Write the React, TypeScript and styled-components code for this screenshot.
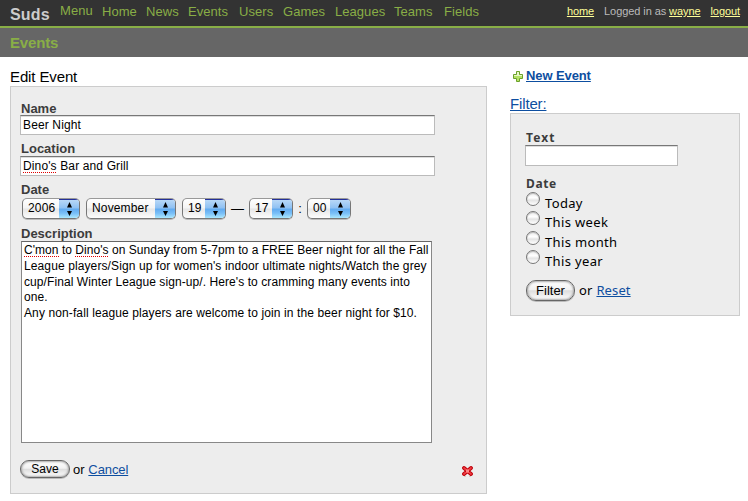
import React from "react";
import styled, { createGlobalStyle } from "styled-components";

const GlobalStyle = createGlobalStyle`
  * { box-sizing: border-box; }
  html, body { margin: 0; padding: 0; background: #fff; }
  body { width: 748px; height: 501px; overflow: hidden; font-family: "Liberation Sans", Arial, sans-serif; color: #000; }
`;

const Header = styled.header`
  display: flex;
  height: 28px;
  padding: 0 8px 0 10px;
  background: #333;
  border-bottom: 2px solid #89ae46;
`;
const Logo = styled.div`
  width: 50px;
  padding-top: 5px;
  font-size: 16px;
  line-height: 19px;
  letter-spacing: 0.15px;
  font-weight: bold;
  color: #ccc;
`;
const Nav = styled.nav`
  display: flex;
  flex: 1;
`;
const NavItem = styled.a<{ $top: number; $w: number }>`
  width: ${(p) => p.$w}px;
  padding-top: ${(p) => p.$top}px;
  font-size: 13px;
  line-height: 15px;
  letter-spacing: 0.05px;
  white-space: nowrap;
  color: #89ae46;
`;
const Account = styled.div`
  display: flex;
  gap: 10px;
  padding-top: 5px;
  font-size: 11px;
  line-height: 13px;
  letter-spacing: -0.08px;
  color: #bbb;
`;
const AccountLink = styled.a`
  color: #ff9;
  text-decoration: underline;
`;
const TitleBar = styled.div`
  height: 29px;
  padding: 6px 10px;
  background: #666;
  color: #89ae46;
  font-size: 15px;
  line-height: 17px;
  letter-spacing: -0.15px;
  font-weight: bold;
`;

const Body = styled.div`
  display: flex;
  gap: 23px;
  padding: 0 8px 0 10px;
`;
const Main = styled.main`
  width: 477px;
`;
const Heading = styled.h1`
  height: 29px;
  margin: 0;
  padding-top: 11px;
  font-size: 15px;
  line-height: 17px;
  letter-spacing: -0.12px;
  font-weight: normal;
`;
const Panel = styled.section`
  border: 1px solid #ccc;
  background: #ededed;
`;
const EditPanel = styled(Panel)`
  height: 408px;
  padding: 14px 0 0 9px;
`;
const Label = styled.div<{ $line?: number }>`
  height: 14px;
  padding-left: 1px;
  font-size: 13px;
  line-height: ${(p) => p.$line ?? 13}px;
  font-weight: bold;
  color: #3c3c3c;
  white-space: nowrap;
`;
const Field = styled.div<{ $w: number; $h: number }>`
  width: ${(p) => p.$w}px;
  height: ${(p) => p.$h}px;
  padding: 2px 0 0 2px;
  border: 1px solid #bbb;
  border-top: 1px solid #777;
  box-shadow: inset 0 1px 0 #ddd;
  background: #fff;
  font-size: 12px;
  line-height: 14px;
  letter-spacing: 0.13px;
`;
const EditField = styled(Field)`
  margin-bottom: 7px;
`;
const Misspelt = styled.span`
  background: repeating-linear-gradient(90deg, #e00000 0 1px, transparent 1px 2px) left bottom / 100% 1px no-repeat;
`;

const DateRow = styled.div`
  display: flex;
  align-items: center;
  height: 22px;
  padding-left: 2px;
  margin-bottom: 8px;
  font-size: 13px;
`;
const SelectBox = styled.div<{ $w: number }>`
  display: flex;
  width: ${(p) => p.$w}px;
  height: 21px;
  overflow: hidden;
  border: 1px solid #777;
  border-top-color: #999;
  border-radius: 5px;
  box-shadow: 0 1px 0 #bbb;
  background: linear-gradient(#fff 0%, #f4f4f4 48%, #e6e6e6 52%, #fcfcfc 100%);
`;
const SelectValue = styled.div`
  flex: 1;
  padding-left: 5px;
  font-size: 12px;
  line-height: 19px;
  letter-spacing: 0.15px;
  white-space: nowrap;
`;
const Stepper = styled.div`
  width: 20px;
  height: 20px;
  border-top: 1px solid #23309a;
  background: linear-gradient(#b8d8f7 0%, #8fc1f3 42%, #62abf0 48%, #79bff8 70%, #b5f0ff 100%);
`;
const Between = styled.span<{ $w: number }>`
  width: ${(p) => p.$w}px;
  text-align: center;
`;

const TextArea = styled.div`
  width: 411px;
  height: 202px;
  margin-left: 1px;
  padding: 1px 0 0 2px;
  border: 1px solid #888;
  border-top-color: #666;
  background: #fff;
  font-size: 12px;
  line-height: 15.75px;
  white-space: nowrap;
`;
const Line = styled.div<{ $track?: number }>`
  letter-spacing: ${(p) => p.$track ?? 0}px;
`;
const Actions = styled.div`
  display: flex;
  align-items: center;
  height: 20px;
  margin-top: 16px;
  padding-right: 13px;
  font-size: 13px;
  letter-spacing: -0.1px;
`;
const PushButton = styled.button<{ $w: number; $h: number; $size: number }>`
  width: ${(p) => p.$w}px;
  height: ${(p) => p.$h}px;
  margin: 0 3px 0 0;
  padding: 0;
  border: 1px solid #666;
  border-radius: 10px;
  box-shadow: inset 0 0 2px 1px #aaa, 0 1px 0 #bbb;
  background: linear-gradient(#fff 0%, #f2f2f2 45%, #dedede 52%, #fff 100%);
  font: ${(p) => p.$size}px "Liberation Sans", Arial, sans-serif;
  color: #000;
`;
const Link = styled.a`
  color: #0d4ea0;
  text-decoration: underline;
`;
const ActionLink = styled(Link)`
  margin-left: 4px;
`;
const Spacer = styled.div`
  flex: 1;
`;
const DeleteSlot = styled.div`
  display: flex;
  padding-top: 5px;
`;

const Side = styled.aside`
  width: 230px;
`;
const NewEvent = styled.div`
  display: flex;
  align-items: center;
  gap: 3px;
  height: 36px;
  padding: 2px 0 0 3px;
  font-size: 13px;
  line-height: 15px;
  letter-spacing: -0.1px;
  font-weight: bold;
`;
const NewEventLink = styled(Link)`
  margin-top: -1px;
`;
const FilterTitle = styled.div`
  height: 20px;
  padding-top: 3px;
  font-size: 15px;
  line-height: 16px;
  letter-spacing: -0.15px;
`;
const FilterPanel = styled(Panel)`
  height: 203px;
  padding: 16px 0 0 14px;
  font-family: "Noto Sans", "Open Sans", sans-serif;
`;
const FilterLabel = styled.div<{ $track: number }>`
  height: 15px;
  padding-left: 1px;
  font-size: 12px;
  line-height: 16px;
  letter-spacing: ${(p) => p.$track}px;
  font-weight: bold;
  color: #3c3c3c;
`;
const FilterField = styled(Field)`
  margin-bottom: 10px;
`;
const RadioList = styled.div`
  display: grid;
  grid-template-rows: 19px 20px 19px 19px;
  margin-left: 1px;
`;
const RadioRow = styled.label`
  display: flex;
  gap: 5px;
  font-size: 13px;
  line-height: 24px;
  letter-spacing: 0.35px;
`;
const Radio = styled.span`
  width: 14px;
  height: 14px;
  margin-top: 1px;
  border: 1px solid #777;
  border-radius: 50%;
  box-shadow: inset 0 1px 1px #bbb;
  background: linear-gradient(#eee 0%, #fff 40%, #e4e4e4 60%, #fff 100%);
`;
const FilterActions = styled.div`
  display: flex;
  align-items: center;
  height: 22px;
  margin: 11px 0 0 1px;
  font-size: 13px;
  letter-spacing: 0.1px;
`;
const FilterOr = styled.span`
  padding-left: 1px;
`;

function Select({ width, children }: { width: number; children: React.ReactNode }) {
  return (
    <SelectBox $w={width}>
      <SelectValue>{children}</SelectValue>
      <Stepper>
        <svg width="20" height="18" viewBox="0 0 20 18">
          <path d="M10.5 2 L13 7.5 H8 Z M8 11 H13 L10.5 16 Z" fill="#000" />
        </svg>
      </Stepper>
    </SelectBox>
  );
}

function PlusIcon() {
  return (
    <svg width="10" height="11" viewBox="0 0 10 11">
      <path d="M3.5 .5h3v3h3v4h-3v3h-3v-3h-3v-4h3z" fill="#b5e265" stroke="#6aa02a" />
      <path d="M4 1h2v3h3v1H1V4h3z" fill="#e9f8c8" />
    </svg>
  );
}

function DeleteIcon() {
  return (
    <svg width="11" height="11" viewBox="0 0 11 11">
      <path d="M1.5 9.5l2 1M7.5 10.5l2-1" stroke="#b9b4a4" />
      <path d="M2 2L9 8M9 2L2 8" stroke="#bf000a" strokeWidth="3.8" strokeLinecap="round" />
      <path d="M3 3h5v4H3z" fill="#bf000a" />
      <path d="M2 2L9 8M9 2L2 8" stroke="#ee3c43" strokeWidth="1.7" strokeLinecap="round" />
      <path d="M4 3.5h3v3H4z" fill="#ff8585" />
    </svg>
  );
}

const navItems = [
  { name: "Menu", width: 42 },
  { name: "Home", width: 44 },
  { name: "News", width: 42 },
  { name: "Events", width: 51 },
  { name: "Users", width: 44 },
  { name: "Games", width: 52 },
  { name: "Leagues", width: 59 },
  { name: "Teams", width: 50 },
  { name: "Fields", width: 40 },
];
const periods = ["Today", "This week", "This month", "This year"];

export default function App() {
  return (
    <>
      <GlobalStyle />
      <Header>
        <Logo>Suds</Logo>
        <Nav>
          {navItems.map((n, i) => (
            <NavItem key={n.name} $w={n.width} $top={i === 0 ? 3 : 4}>{n.name}</NavItem>
          ))}
        </Nav>
        <Account>
          <AccountLink>home</AccountLink>
          <span>Logged in as <AccountLink>wayne</AccountLink></span>
          <AccountLink>logout</AccountLink>
        </Account>
      </Header>
      <TitleBar>Events</TitleBar>
      <Body>
        <Main>
          <Heading>Edit Event</Heading>
          <EditPanel>
            <Label $line={15}>Name</Label>
            <EditField $w={415} $h={20}>Beer Night</EditField>
            <Label>Location</Label>
            <EditField $w={415} $h={20}><Misspelt>Dino's</Misspelt> Bar and Grill</EditField>
            <Label>Date</Label>
            <DateRow>
              <Select width={58}>2006</Select>
              <Between $w={6} />
              <Select width={90}>November</Select>
              <Between $w={6} />
              <Select width={44}>19</Select>
              <Between $w={23}>—</Between>
              <Select width={44}>17</Select>
              <Between $w={14}>:</Between>
              <Select width={44}>00</Select>
            </DateRow>
            <Label>Description</Label>
            <TextArea>
              <Line $track={0.04}><Misspelt>C'mon</Misspelt> to <Misspelt>Dino's</Misspelt> on Sunday from 5-7pm to a FREE Beer night for all the Fall</Line>
              <Line $track={0.11}>League players/Sign up for women's indoor ultimate nights/Watch the grey</Line>
              <Line $track={0.08}>cup/Final Winter League sign-up/. Here's to cramming many events into</Line>
              <Line $track={0.08}>one.</Line>
              <Line $track={0.11}>Any non-fall league players are welcome to join in the beer night for $10.</Line>
            </TextArea>
            <Actions>
              <PushButton $w={50} $h={18} $size={12}>Save</PushButton>
              or
              <ActionLink>Cancel</ActionLink>
              <Spacer />
              <DeleteSlot><DeleteIcon /></DeleteSlot>
            </Actions>
          </EditPanel>
        </Main>
        <Side>
          <NewEvent>
            <PlusIcon />
            <NewEventLink>New Event</NewEventLink>
          </NewEvent>
          <FilterTitle><Link>Filter:</Link></FilterTitle>
          <FilterPanel>
            <FilterLabel $track={1.1}>Text</FilterLabel>
            <FilterField $w={153} $h={21} />
            <FilterLabel $track={0.6}>Date</FilterLabel>
            <RadioList>
              {periods.map((p) => (
                <RadioRow key={p}><Radio />{p}</RadioRow>
              ))}
            </RadioList>
            <FilterActions>
              <PushButton $w={49} $h={21} $size={13}>Filter</PushButton>
              <FilterOr>or</FilterOr>
              <ActionLink>Reset</ActionLink>
            </FilterActions>
          </FilterPanel>
        </Side>
      </Body>
    </>
  );
}
